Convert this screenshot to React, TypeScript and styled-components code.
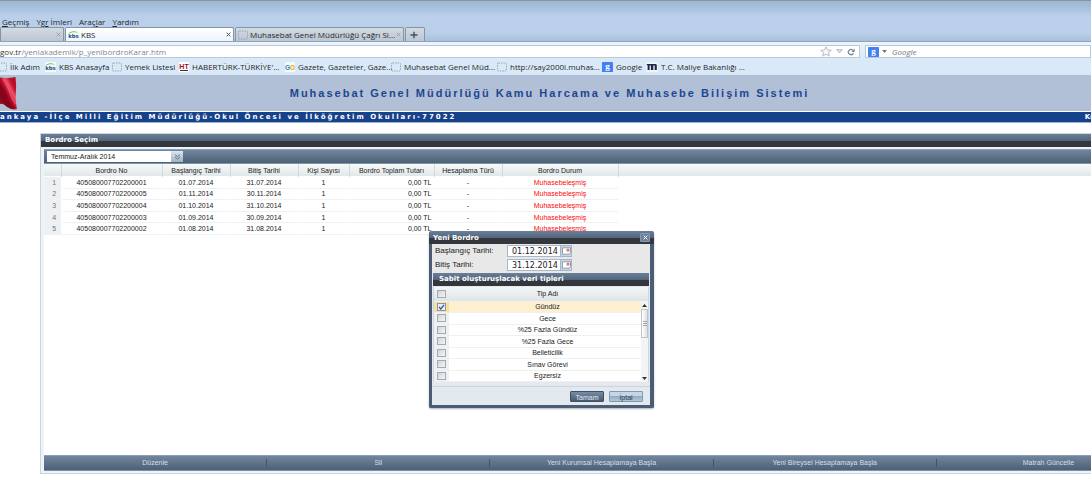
import React from "react";
import styled, { createGlobalStyle, css } from "styled-components";

const chromeFont = `"Open Sans", "Noto Sans", sans-serif`;
const gridFont = `"Liberation Sans", Arial, sans-serif`;
const titleFont = `"DejaVu Sans", Verdana, sans-serif`;

const GlobalStyle = createGlobalStyle`
  *, *::before, *::after { box-sizing: border-box; }
  html, body { margin: 0; padding: 0; background: #fff; overflow-x: hidden; }
  button, input, select { font: inherit; color: inherit; margin: 0; }
`;

const Page = styled.div`
  position: relative;
  display: flex;
  flex-direction: column;
  min-height: 100vh;
  overflow: hidden;
  padding-bottom: 10px;
  font: 7px/10px ${gridFont};
  color: #222;
`;

/* ---------- browser window ---------- */

const Browser = styled.header`
  display: flex;
  flex-direction: column;
  border-top: 1px solid #8f9499;
  background: linear-gradient(#9ab6d3, #b9cfea 15px, #b9cfea 32px, #a9c0dc 40px, #dae9f8 40px);
  font: 8px/10px ${chromeFont};
  color: #26282c;
`;

const MenuBar = styled.nav`
  display: flex;
  gap: 7px;
  padding: 15px 0 0 2px;
  height: 26px;
`;

const MenuButton = styled.button`
  padding: 0;
  border: 0;
  background: none;
  line-height: 11px;
  white-space: pre;
`;

const TabStrip = styled.div`
  display: flex;
  align-items: flex-end;
  gap: 1px;
  height: 14px;
`;

const Tab = styled.div<{ $width: number; $active?: boolean }>`
  display: flex;
  align-items: center;
  gap: 1px;
  width: ${(p) => p.$width}px;
  height: 14px;
  padding: 0 2px;
  border: 1px solid #8495a8;
  border-bottom: 0;
  border-radius: 2px 2px 0 0;
  background: ${(p) => (p.$active ? "linear-gradient(#fff, #edf4fc)" : "linear-gradient(#d3dae2, #bcc6d2)")};
  white-space: nowrap;
  svg { flex: none; }
`;

const TabLabel = styled.span`
  flex: 1;
  padding-left: 1px;
`;

const TabButton = styled.button<{ $dim?: boolean }>`
  display: flex;
  padding: 0;
  border: 0;
  background: none;
  color: ${(p) => (p.$dim ? "#98a1ab" : "#44505c")};
`;

const NavBar = styled.div`
  display: flex;
  gap: 5px;
  height: 18px;
  padding: 3px 0 1px;
  border-top: 1px solid #8fa3b9;
  background: linear-gradient(#edf4fc, #dae9f8);
`;

const AddressBox = styled.form`
  display: flex;
  flex: 1;
  align-items: center;
  gap: 4px;
  padding-right: 4px;
  border: 1px solid #b8c9db;
  border-left: 0;
  background: #fff;
`;

const Address = styled.p`
  flex: 1;
  margin: 0;
  color: #85888c;
  white-space: nowrap;
  b { color: #333; font-weight: 400; }
`;

const SearchBox = styled(AddressBox)`
  flex: 0 0 226px;
  gap: 3px;
  padding-left: 2px;
  border-left: 1px solid #b8c9db;
`;

const SearchInput = styled.input`
  flex: 1;
  min-width: 0;
  height: 10px;
  padding: 0 2px;
  border: 0;
  outline: 0;
  background: none;
  &::placeholder { color: #777; font-style: italic; opacity: 1; }
`;

const Bookmarks = styled.nav`
  display: grid;
  grid-template-columns: 45px 67px 67px 106px 106px 106px 105px 44px auto;
  align-items: center;
  height: 16px;
  background: #dae9f8;
`;

const Bookmark = styled.a<{ $cut?: boolean }>`
  display: flex;
  align-items: center;
  gap: 3px;
  margin-left: ${(p) => (p.$cut ? "-3px" : "0")};
  color: inherit;
  text-decoration: none;
  white-space: nowrap;
  svg { flex: none; }
`;

/* ---------- site banner ---------- */

const Banner = styled.div`
  display: flex;
  align-items: center;
  height: 36px;
  background: #b1bfd7;
`;

const BannerTitle = styled.h1`
  flex: 1;
  margin: 0;
  padding-right: 10px;
  color: #1c4790;
  font: bold 11px/14px ${gridFont};
  letter-spacing: 2px;
  text-align: center;
  white-space: nowrap;
`;

const UnitBar = styled.div`
  display: flex;
  justify-content: space-between;
  align-items: center;
  height: 12px;
  border-top: 1px solid #fff;
  border-bottom: 1px solid #9db0d0;
  background: #16418b;
  color: #fff;
  font: bold 7px/10px ${titleFont};
  letter-spacing: 2px;
  white-space: nowrap;
`;

const UserName = styled.span`
  margin-right: -4px;
  letter-spacing: normal;
`;

/* ---------- main panel ---------- */

const titleSkin = css`
  background: linear-gradient(#6a7f98, #50637a 55%, #34383e 56%, #33363b);
  color: #fff;
  font: bold 7px/12px ${titleFont};
`;

const barSkin = css`
  background: linear-gradient(#71869f, #4c6076);
  border-top: 1px solid #8ba0b5;
  border-bottom: 1px solid #7f93a8;
`;

const Panel = styled.main`
  display: flex;
  flex: 1;
  flex-direction: column;
  margin: 10px -73px 0 40px;
  border: 1px solid #ccd5dd;
`;

const PanelTitle = styled.h2`
  ${titleSkin}
  flex: none;
  height: 13px;
  margin: 0;
  padding-left: 4px;
`;

const PanelBody = styled.div`
  display: flex;
  flex: 1;
  flex-direction: column;
  padding: 2px 3px;
  background: #edf4f9;
`;

const Toolbar = styled.div`
  ${barSkin}
  height: 15px;
  padding: 1px 3px;
`;

const Period = styled.label`
  display: flex;
  width: 136px;
  height: 11px;
  background: #fff;
`;

const PeriodSelect = styled.select`
  flex: 1;
  appearance: none;
  height: 11px;
  padding: 0 0 0 4px;
  border: 0;
  border-radius: 0;
  background: #fff;
`;

const PeriodArrow = styled.span`
  display: flex;
  align-items: center;
  justify-content: center;
  width: 12px;
  background: linear-gradient(#dde6ee, #9fb2c4);
`;

const GridArea = styled.div`
  flex: 1;
  background: linear-gradient(#f7f9f9, #e1e7e8 12px, #fff 12px);
`;

const Grid = styled.table`
  table-layout: fixed;
  width: 574px;
  height: 71px;
  border-collapse: collapse;
  text-align: center;
  white-space: nowrap;
  line-height: 9px;
  th, td { padding: 0; font-weight: 400; border-right: 1px solid transparent; }
  thead th { height: 13px; border-right-color: #d3dadd; }
  tbody tr { border-bottom: 1px solid #f0f2f2; }
  tbody td:first-child { background: #edf1f3; color: #70767b; padding-left: 4px; }
`;

const Amount = styled.td`
  && { padding-right: 2px; text-align: right; }
`;

const Status = styled.td`
  color: #fb0a0a;
`;

const Actions = styled.div`
  ${barSkin}
  display: grid;
  grid-template-columns: repeat(5, 1fr);
  align-items: center;
  height: 16px;
`;

const ActionButton = styled.button`
  height: 8px;
  padding: 0;
  border: 0;
  border-right: 1px solid #42546a;
  background: none;
  color: #d5dee6;
  line-height: 8px;
  &:last-child { border-right: 0; }
`;

/* ---------- dialog window ---------- */

const Dialog = styled.section`
  position: absolute;
  top: 231px;
  left: 429px;
  display: flex;
  flex-direction: column;
  width: 225px;
  border: solid #4a5d75;
  border-width: 0 4px 3px 3px;
  border-radius: 3px 3px 2px 2px;
  background: #e3e9ee;
  box-shadow: 0 1px 2px #aab4bd;
`;

const DialogTitle = styled.header`
  ${titleSkin}
  display: flex;
  align-items: center;
  justify-content: space-between;
  height: 13px;
  margin: 0 -4px 0 -3px;
  padding: 0 4px;
  border-radius: 3px 3px 0 0;
`;

const CloseButton = styled.button`
  display: flex;
  align-items: center;
  justify-content: center;
  width: 10px;
  height: 9px;
  padding: 0;
  border: 1px solid #879bb1;
  border-radius: 1px;
  background: #6c819a;
`;

const Fields = styled.div`
  display: grid;
  gap: 1px;
  padding: 1px 2px 1px 3px;
  background: #e8e8e8;
`;

const Field = styled.label`
  display: grid;
  grid-template-columns: 72px 53px 12px;
  height: 13px;
  font-size: 8px;
  line-height: 12px;
`;

const DateInput = styled.input`
  width: 53px;
  height: 12px;
  padding: 1px 0 0 4px;
  border: 1px solid #a9b9c9;
  border-right: 0;
  outline: 0;
  background: #fff;
  font: 8px/10px ${titleFont};
`;

const DateButton = styled.button`
  display: flex;
  align-items: center;
  justify-content: center;
  height: 12px;
  padding: 0;
  border: 1px solid #a3b5c7;
  background: #c6d5e3;
`;

const TypeTitle = styled.h3`
  ${titleSkin}
  height: 13px;
  margin: 0 1px;
  padding-left: 6px;
`;

const TypeList = styled.div`
  position: relative;
  margin: 1px 1px 4px;
  border: 1px solid #ccd6df;
  border-width: 0 1px;
  background: #fff;
`;

const TypeTable = styled.table`
  table-layout: fixed;
  width: 100%;
  height: 95px;
  border-collapse: collapse;
  text-align: center;
  line-height: 9px;
  td, th { padding: 0; font-weight: 400; border-bottom: 1px solid #f0f0f0; }
  th { height: 14px; }
  thead { background: linear-gradient(#f4f6f6, #dfe5e6); }
  th:last-child, td:last-child { padding-right: 2px; }
`;

const TypeRow = styled.tr<{ $selected: boolean }>`
  background: ${(p) => (p.$selected ? "#fdefd0" : "#fff")};
  td:first-child { background: ${(p) => (p.$selected ? "#fbdf9f" : "#edf1f3")}; }
`;

const Check = styled.input`
  appearance: none;
  display: block;
  width: 9px;
  height: 8px;
  margin: 0 auto;
  border: 1px solid #a4aaae;
  background: linear-gradient(135deg, #d2d5d7, #f4f5f5);
  &:checked {
    border-color: #8796b0;
    background: #e9eefa;
  }
`;

const CheckBox = styled.span`
  position: relative;
  display: block;
  svg { position: absolute; top: 1px; left: 4px; pointer-events: none; }
`;

const ScrollTrack = styled.div`
  position: absolute;
  top: 14px;
  right: 0;
  bottom: 0;
  display: flex;
  flex-direction: column;
  align-items: center;
  justify-content: space-between;
  width: 7px;
  padding: 3px 0 2px;
  background: #f3f4f4;
`;

const ScrollThumb = styled.div`
  display: flex;
  align-items: center;
  justify-content: center;
  width: 7px;
  height: 29px;
  margin: 2px 0 auto;
  border: 1px solid #c0c5ca;
  background: linear-gradient(90deg, #fff, #dde1e4);
`;

const DialogFooter = styled.footer`
  display: flex;
  justify-content: flex-end;
  gap: 5px;
  height: 19px;
  padding: 4px 7px 3px;
  border-top: 1px solid #cbd5de;
`;

const DialogButton = styled.button<{ $primary?: boolean }>`
  width: 34px;
  padding: 1px 0 0;
  border: 1px solid ${(p) => (p.$primary ? "#3d5067" : "#8298ae")};
  border-radius: 1px;
  background: ${(p) => (p.$primary ? "linear-gradient(#788ca4, #465a72)" : "linear-gradient(#c6d6e5 45%, #8fa9c4 46%, #b3c7da)")};
  color: ${(p) => (p.$primary ? "#e6edf4" : "#35424f")};
  line-height: 9px;
`;

/* ---------- drawings ---------- */

const Cross = ({ size = 5, color = "currentColor" }: { size?: number; color?: string }) => (
  <svg width={size} height={size} viewBox="0 0 6 6" stroke={color} strokeWidth="1.2">
    <path d="M.8 .8 5.2 5.2M5.2 .8.8 5.2" />
  </svg>
);

const BlankIcon = () => (
  <svg width="10" height="10" viewBox="0 0 10 10" fill="none">
    <rect x=".5" y="1" width="9" height="8" rx="1" stroke="#8d959d" strokeDasharray="1.5 1" strokeWidth=".8" />
  </svg>
);

const KbsIcon = () => (
  <svg width="11" height="10" viewBox="0 0 11 10">
    <rect width="11" height="10" fill="#f5f9fc" />
    <path d="M.3 4C2 .7 8 .3 10.7 3.4 8 1.8 3 2 .3 4Z" fill="#4cd33c" />
    <text x="5.5" y="8" fontSize="5.4" fontWeight="bold" fontFamily="DejaVu Sans" textAnchor="middle" fill="#234b82">kbs</text>
  </svg>
);

const HtIcon = () => (
  <svg width="10" height="10" viewBox="0 0 10 10">
    <rect width="10" height="10" fill="#fff" />
    <text x="5" y="7" fontSize="7" fontWeight="bold" fontFamily="Liberation Sans" textAnchor="middle" fill="#a50d1b">HT</text>
    <path d="M1 8.5h8" stroke="#333" />
  </svg>
);

const GoIcon = () => (
  <svg width="10" height="10" viewBox="0 0 10 10" fontSize="6.5" fontWeight="bold" fontFamily="Liberation Sans">
    <rect width="10" height="10" fill="#f6f8f6" />
    <text x="0" y="7.5" fill="#258cae">G</text>
    <text x="5" y="7.5" fill="#e9a020">O</text>
  </svg>
);

const GoogleIcon = () => (
  <svg width="11" height="10" viewBox="0 0 11 10">
    <rect width="11" height="10" rx=".5" fill="#4580f2" />
    <text x="5.5" y="7.4" fontSize="9" fontFamily="Liberation Serif" fontWeight="bold" textAnchor="middle" fill="#fff">g</text>
  </svg>
);

const MaliyeIcon = () => (
  <svg width="12" height="10" viewBox="0 0 12 10">
    <rect width="12" height="10" fill="#eef3f8" />
    <path d="M1 2h8.4q1.4 0 1.4 1.3V8H8.7V3.6H7.3V8H4.9V3.6H3.6V8H1.6V3.3L.6 3.1Z" fill="#1d2747" />
  </svg>
);

const StarIcon = () => (
  <svg width="12" height="11" viewBox="0 0 12 11" fill="#fafafa" stroke="#a8adb3" strokeWidth=".8">
    <path d="M6 .8 7.5 4l3.8.3-2.9 2.3.9 3.5L6 8.2l-3.3 1.9.9-3.5L.7 4.3 4.5 4Z" />
  </svg>
);

const DownIcon = () => (
  <svg width="7" height="5" viewBox="0 0 7 5" fill="#dde2e7" stroke="#a1aab4" strokeWidth=".7">
    <path d="M.6.6h5.8L3.5 4Z" />
  </svg>
);

const ReloadIcon = () => (
  <svg width="8" height="8" viewBox="0 0 8 8">
    <path d="M6.6 5.4A2.9 2.5 0 1 1 6 2.2" fill="none" stroke="#7b8794" strokeWidth="1.3" />
    <path d="M7.7.6v3.3H4.4Z" fill="#7b8794" />
  </svg>
);

const FlagImage = () => (
  <svg width="18" height="36" viewBox="0 0 18 36">
    <defs>
      <linearGradient id="cloth" x1="0" y1="1" x2="1" y2="0">
        <stop offset="0" stopColor="#a00d24" />
        <stop offset=".35" stopColor="#7f0519" />
        <stop offset=".5" stopColor="#c3102e" />
        <stop offset=".62" stopColor="#ef5468" />
        <stop offset=".75" stopColor="#c2122f" />
        <stop offset="1" stopColor="#a30a22" />
      </linearGradient>
    </defs>
    <path d="M0 2.5Q8 3.5 15.5 2q1 8 .4 15t1 17Q12 35.5 7 32 3 28 0 29Z" fill="url(#cloth)" />
    <path d="M0 8Q6 15 8 22t8 11Q11 34 7 30.5 3 24 0 22Z" fill="#84061b" opacity=".7" />
    <path d="M3 4Q8 12 10 18t5.5 11" fill="none" stroke="#f0627a" strokeWidth="1.3" opacity=".7" />
  </svg>
);

const CalendarIcon = () => (
  <svg width="9" height="8" viewBox="0 0 9 8">
    <path d="M.5.8h8v4.7L7 7.2H.5Z" fill="#fff" stroke="#8797a8" strokeWidth=".9" />
    <circle cx="6" cy="3.2" r="1.1" fill="none" stroke="#cf3c3c" strokeWidth=".9" />
  </svg>
);

/* ---------- data ---------- */

const bookmarks = [
  { label: "İlk Adım", Icon: BlankIcon },
  { label: "KBS Anasayfa", Icon: KbsIcon },
  { label: "Yemek Listesi", Icon: BlankIcon },
  { label: "HABERTÜRK-TÜRKİYE'...", Icon: HtIcon },
  { label: "Gazete, Gazeteler, Gaze...", Icon: GoIcon },
  { label: "Muhasebat Genel Müd...", Icon: BlankIcon },
  { label: "http://say2000i.muhas...", Icon: BlankIcon },
  { label: "Google", Icon: GoogleIcon },
  { label: "T.C. Maliye Bakanlığı ...", Icon: MaliyeIcon },
];

const columns: [string, number][] = [
  ["", 17],
  ["Bordro No", 101],
  ["Başlangıç Tarihi", 68],
  ["Bitiş Tarihi", 68],
  ["Kişi Sayısı", 51],
  ["Bordro Toplam Tutarı", 85],
  ["Hesaplama Türü", 68],
  ["Bordro Durum", 116],
];

const payrolls = [
  ["405080007702200001", "01.07.2014", "31.07.2014"],
  ["405080007702200005", "01.11.2014", "30.11.2014"],
  ["405080007702200004", "01.10.2014", "31.10.2014"],
  ["405080007702200003", "01.09.2014", "30.09.2014"],
  ["405080007702200002", "01.08.2014", "31.08.2014"],
];

const types = ["Gündüz", "Gece", "%25 Fazla Gündüz", "%25 Fazla Gece", "Belleticilik", "Sınav Görevi", "Egzersiz"];

const actions = ["Düzenle", "Sil", "Yeni Kurumsal Hesaplamaya Başla", "Yeni Bireysel Hesaplamaya Başla", "Matrah Güncelle"];

const TypeCheck = ({ label, checked = false }: { label: string; checked?: boolean }) => (
  <CheckBox>
    <Check type="checkbox" aria-label={label} defaultChecked={checked} />
    {checked && (
      <svg width="7" height="6" viewBox="0 0 7 6" fill="none" stroke="#3955a0" strokeWidth="1.3">
        <path d="M1 2.8 2.8 5 6 .8" />
      </svg>
    )}
  </CheckBox>
);

export default function App() {
  return (
    <Page>
      <GlobalStyle />
      <Browser>
        <MenuBar>
          <MenuButton><u>G</u>eçmiş</MenuButton>
          <MenuButton>Yg<u>r</u> İmleri</MenuButton>
          <MenuButton>Araç<u>l</u>ar</MenuButton>
          <MenuButton><u>Y</u>ardım</MenuButton>
        </MenuBar>
        <TabStrip>
          <Tab $width={64}>
            <TabLabel />
            <TabButton $dim aria-label="Sekmeyi kapat"><Cross /></TabButton>
          </Tab>
          <Tab $width={169} $active>
            <KbsIcon />
            <TabLabel>KBS</TabLabel>
            <TabButton aria-label="Sekmeyi kapat"><Cross /></TabButton>
          </Tab>
          <Tab $width={169}>
            <BlankIcon />
            <TabLabel>Muhasebat Genel Müdürlüğü Çağrı Si...</TabLabel>
            <TabButton $dim aria-label="Sekmeyi kapat"><Cross /></TabButton>
          </Tab>
          <Tab $width={20}>
            <TabButton aria-label="Yeni sekme">
              <svg width="12" height="8" viewBox="0 0 12 8" stroke="#44505c" strokeWidth="1.4"><path d="M2.5 4h7M6 .8v6.4" /></svg>
            </TabButton>
          </Tab>
        </TabStrip>
        <NavBar>
          <AddressBox>
            <Address><b>gov.tr</b>/yeniakademik/p_yenibordroKarar.htm</Address>
            <StarIcon />
            <DownIcon />
            <ReloadIcon />
          </AddressBox>
          <SearchBox>
            <GoogleIcon />
            <svg width="5" height="3" viewBox="0 0 5 3"><path d="M0 0h5L2.5 3Z" fill="#777" /></svg>
            <SearchInput placeholder="Google" aria-label="Google" />
          </SearchBox>
        </NavBar>
        <Bookmarks>
          {bookmarks.map(({ label, Icon }, i) => (
            <Bookmark key={label} href="#" $cut={i === 0}>
              <Icon />
              {label}
            </Bookmark>
          ))}
        </Bookmarks>
      </Browser>

      <Banner>
        <FlagImage />
        <BannerTitle>Muhasebat Genel Müdürlüğü Kamu Harcama ve Muhasebe Bilişim Sistemi</BannerTitle>
      </Banner>
      <UnitBar>
        <span>ankaya -İlçe Milli Eğitim Müdürlüğü-Okul Öncesi ve İlköğretim Okulları-77022</span>
        <UserName>Ku</UserName>
      </UnitBar>

      <Panel>
        <PanelTitle>Bordro Seçim</PanelTitle>
        <PanelBody>
          <Toolbar>
            <Period>
              <PeriodSelect aria-label="Dönem">
                <option>Temmuz-Aralık 2014</option>
              </PeriodSelect>
              <PeriodArrow>
                <svg width="7" height="6" viewBox="0 0 7 6" fill="none" stroke="#5b6b7b" strokeWidth=".9"><path d="M1 .8 3.5 2.5 6 .8M1 3.2 3.5 5 6 3.2" /></svg>
              </PeriodArrow>
            </Period>
          </Toolbar>
          <GridArea>
            <Grid>
              <colgroup>
                {columns.map(([name, width]) => <col key={name} width={width} />)}
              </colgroup>
              <thead>
                <tr>{columns.map(([name]) => <th key={name}>{name}</th>)}</tr>
              </thead>
              <tbody>
                {payrolls.map(([no, start, end], i) => (
                  <tr key={no}>
                    <td>{i + 1}</td>
                    <td>{no}</td>
                    <td>{start}</td>
                    <td>{end}</td>
                    <td>1</td>
                    <Amount>0,00 TL</Amount>
                    <td>-</td>
                    <Status>Muhasebeleşmiş</Status>
                  </tr>
                ))}
              </tbody>
            </Grid>
          </GridArea>
          <Actions>
            {actions.map((name) => <ActionButton key={name}>{name}</ActionButton>)}
          </Actions>
        </PanelBody>
      </Panel>

      <Dialog role="dialog" aria-label="Yeni Bordro">
        <DialogTitle>
          Yeni Bordro
          <CloseButton aria-label="Kapat"><Cross color="#fff" /></CloseButton>
        </DialogTitle>
        <Fields>
          <Field>
            Başlangıç Tarihi:
            <DateInput defaultValue="01.12.2014" />
            <DateButton aria-label="Başlangıç tarihini seç"><CalendarIcon /></DateButton>
          </Field>
          <Field>
            Bitiş Tarihi:
            <DateInput defaultValue="31.12.2014" />
            <DateButton aria-label="Bitiş tarihini seç"><CalendarIcon /></DateButton>
          </Field>
        </Fields>
        <TypeTitle>Sabit oluşturuşlacak veri tipleri</TypeTitle>
        <TypeList>
          <TypeTable>
            <colgroup><col width={15} /><col /></colgroup>
            <thead>
              <tr>
                <th><TypeCheck label="Tümü" /></th>
                <th>Tip Adı</th>
              </tr>
            </thead>
            <tbody>
              {types.map((name, i) => (
                <TypeRow key={name} $selected={i === 0}>
                  <td><TypeCheck label={name} checked={i === 0} /></td>
                  <td>{name}</td>
                </TypeRow>
              ))}
            </tbody>
          </TypeTable>
          <ScrollTrack>
            <svg width="5" height="3" viewBox="0 0 5 3"><path d="M0 3h5L2.5 0Z" fill="#333" /></svg>
            <ScrollThumb>
              <svg width="4" height="5" viewBox="0 0 4 5" stroke="#888" strokeWidth=".7"><path d="M0 .5h4M0 2.5h4M0 4.5h4" /></svg>
            </ScrollThumb>
            <svg width="5" height="3" viewBox="0 0 5 3"><path d="M0 0h5L2.5 3Z" fill="#333" /></svg>
          </ScrollTrack>
        </TypeList>
        <DialogFooter>
          <DialogButton $primary>Tamam</DialogButton>
          <DialogButton>İptal</DialogButton>
        </DialogFooter>
      </Dialog>
    </Page>
  );
}
